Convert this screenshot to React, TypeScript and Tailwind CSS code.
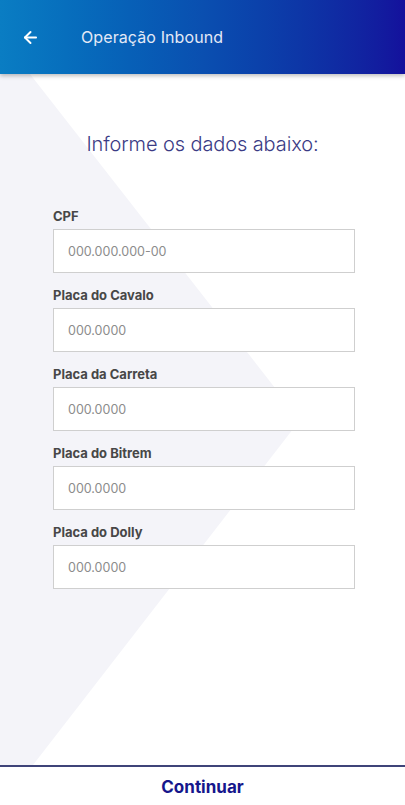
import React from "react";
import { ArrowLeft } from "lucide-react";

const fields = [
  { label: "CPF", placeholder: "000.000.000-00" },
  { label: "Placa do Cavalo", placeholder: "000.0000" },
  { label: "Placa da Carreta", placeholder: "000.0000" },
  { label: "Placa do Bitrem", placeholder: "000.0000" },
  { label: "Placa do Dolly", placeholder: "000.0000" },
];

const App = () => {
  return (
    <div className="h-[805px] w-full flex flex-col bg-white overflow-hidden font-['Inter','Liberation_Sans',sans-serif]">
      {/* HEADER */}
      <header className="relative z-10 h-[74px] flex-shrink-0 flex items-center bg-linear-to-r from-[#0a7dc3] via-[#0a4fb0] to-[#14109c] shadow-[0_2px_4px_rgba(0,0,0,0.25)]">
        <button className="ml-[20px] w-[20px] h-[20px] flex items-center justify-center text-white">
          <ArrowLeft size={19} strokeWidth={2.5} />
        </button>
        <h1 className="ml-[41px] text-[16px] font-normal text-[#e3e9f6] tracking-[0.1px]">Operação Inbound</h1>
      </header>

      {/* CONTENT */}
      <main className="relative flex-1">
        <svg className="absolute inset-0 w-full h-full" viewBox="0 0 405 691" preserveAspectRatio="none">
          <polygon points="0,0 30,0 300,346 33,691 0,691" fill="#f4f4f9" />
        </svg>

        <div className="relative flex flex-col px-[53px] pt-[56px]">
          <h2 className="text-center text-[20px] leading-[28px] font-light text-[#3b3b85] tracking-[-0.1px]">
            Informe os dados abaixo:
          </h2>

          <div className="mt-[50px] flex flex-col gap-[14px] w-[302px]">
            {fields.map((f) => (
              <div key={f.label} className="flex flex-col gap-[4px]">
                <label className="text-[13px] leading-[17px] font-bold text-[#474747]">{f.label}</label>
                <input
                  type="text"
                  placeholder={f.placeholder}
                  className="h-[44px] w-full bg-white border border-[#cfcfcf] px-[14px] text-[12.5px] text-[#333] placeholder:text-[#8c8c8c] outline-none"
                />
              </div>
            ))}
          </div>
        </div>
      </main>

      {/* FOOTER */}
      <footer className="h-[40px] flex-shrink-0 border-t-2 border-[#3f4479] bg-white flex items-center justify-center pt-[3px]">
        <button className="text-[17px] font-bold text-[#15168c]">Continuar</button>
      </footer>
    </div>
  );
};

export default App;
